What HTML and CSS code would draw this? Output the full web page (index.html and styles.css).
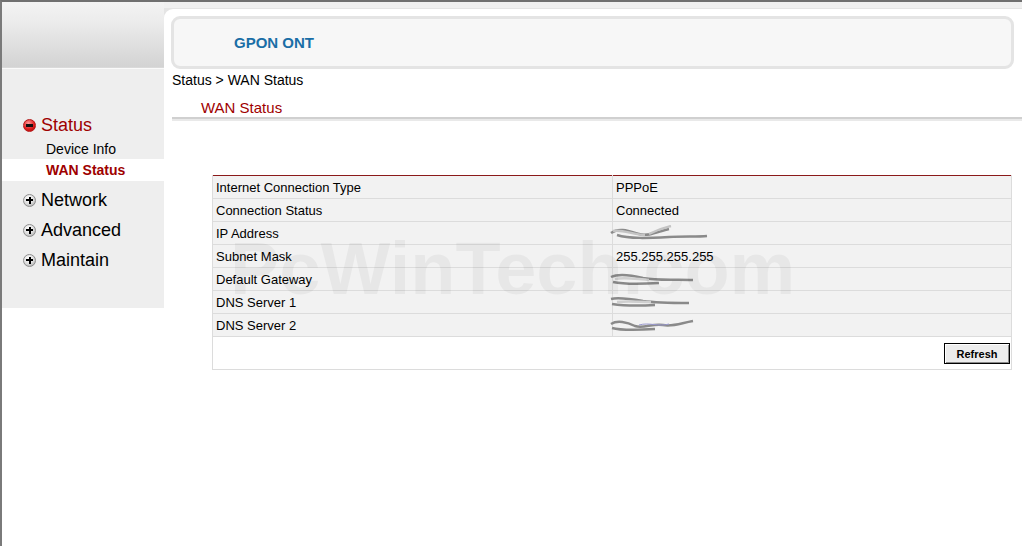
FILE: index.html
```html
<!DOCTYPE html>
<html>
<head>
<meta charset="utf-8">
<title>GPON ONT - WAN Status</title>
<link rel="stylesheet" href="styles.css">
</head>
<body>
<div class="frame">
  <aside class="side">
    <div class="logo"></div>
    <nav class="nav">
      <div class="grp open"><span class="ico minus"></span>Status</div>
      <div class="sub">Device Info</div>
      <div class="sub active">WAN Status</div>
      <div class="grp first-closed"><span class="ico plus"></span>Network</div>
      <div class="grp"><span class="ico plus"></span>Advanced</div>
      <div class="grp"><span class="ico plus"></span>Maintain</div>
    </nav>
  </aside>
  <main class="main">
    <div class="topstrip"></div>
    <div class="panel">
      <div class="hdr"><span class="brand">GPON ONT</span></div>
      <div class="crumb">Status &gt; WAN Status</div>
      <div class="title">WAN Status</div>
      <div class="sep"></div>
      <table class="info">
        <tr><td class="k">Internet Connection Type</td><td class="v">PPPoE</td></tr>
        <tr><td class="k">Connection Status</td><td class="v">Connected</td></tr>
        <tr><td class="k">IP Address</td><td class="v"><svg class="blur b1" width="100" height="16" viewBox="0 0 100 16"><path d="M2 8 C10 2 20 6 30 9 C40 12 50 6 60 4 M8 10 C20 14 40 13 60 12 C75 11 88 12 98 11" fill="none" stroke="#8a8a8a" stroke-width="2.5"/><path d="M4 6 C14 4 24 10 36 10 M40 9 C52 3 58 2 62 1" fill="none" stroke="#c4c4c4" stroke-width="2.5"/></svg></td></tr>
        <tr><td class="k">Subnet Mask</td><td class="v">255.255.255.255</td></tr>
        <tr><td class="k">Default Gateway</td><td class="v"><svg class="blur" width="90" height="16" viewBox="0 0 90 16"><path d="M2 6 C10 2 22 4 34 7 C50 10 66 8 84 9 M4 11 C18 14 34 13 50 12" fill="none" stroke="#8a8a8a" stroke-width="2.5"/><path d="M6 8 C16 6 26 8 40 9" fill="none" stroke="#cfcfcf" stroke-width="2.5"/></svg></td></tr>
        <tr><td class="k">DNS Server 1</td><td class="v"><svg class="blur" width="90" height="16" viewBox="0 0 90 16"><path d="M2 5 C10 3 22 5 34 7 C48 9 64 9 80 9 M3 10 C16 12 30 12 46 11" fill="none" stroke="#8a8a8a" stroke-width="2.5"/><path d="M8 8 C18 7 30 8 42 8" fill="none" stroke="#cfcfcf" stroke-width="2.5"/></svg></td></tr>
        <tr><td class="k">DNS Server 2</td><td class="v"><svg class="blur" width="90" height="16" viewBox="0 0 90 16"><path d="M2 7 C8 3 18 5 26 9 C34 12 44 6 54 8 C64 10 72 6 84 4 M3 11 C14 14 30 13 46 12" fill="none" stroke="#8a8a8a" stroke-width="2.5"/><path d="M30 8 C40 5 50 10 60 7" fill="none" stroke="#9a9ad0" stroke-width="1"/></svg></td></tr>
        <tr class="foot"><td colspan="2"><button class="btn">Refresh</button></td></tr>
      </table>
    </div>
  </main>
  <div class="watermark">PcWinTech.com</div>
</div>
</body>
</html>
```
FILE: styles.css
```css
html, body {
  margin: 0;
  padding: 0;
  background: #fff;
  font-family: "Liberation Sans", Arial, sans-serif;
}
.frame {
  position: relative;
  display: flex;
  height: 544px;
  border-top: 2px solid #707070;
  border-left: 2px solid #7a7a7a;
  overflow: hidden;
}
.side {
  width: 162px;
  flex: none;
}
.logo {
  height: 65px;
  background: linear-gradient(#f3f3f3, #ececec 30%, #d3d3d3);
  border-bottom: 1px solid #dadada;
}
.nav {
  height: 197px;
  padding-top: 42px;
  background: #eeeeee;
  border-top: 1px solid #fafafa;
}
.grp {
  height: 28px;
  line-height: 28px;
  font-size: 18px;
  color: #000;
  padding-left: 21px;
  display: flex;
  align-items: center;
}
.grp.open { color: #9e0000; }
.grp.first-closed { margin-top: 5px; }
.grp + .grp { margin-top: 2px; }
.ico {
  width: 13px;
  height: 13px;
  border-radius: 50%;
  margin-right: 5px;
  position: relative;
  flex: none;
  box-sizing: border-box;
}
.ico.minus {
  background: radial-gradient(circle at 40% 30%, #ff9a9a, #e02020 55%, #a80000);
  border: 1px solid #b41818;
}
.ico.plus {
  background: radial-gradient(circle at 40% 30%, #ffffff, #dcdcdc 55%, #9a9a9a);
  border: 1px solid #8e8e8e;
}
.ico::before, .ico.plus::after {
  content: "";
  position: absolute;
  background: #000;
}
.ico.minus::before {
  left: 2px; right: 2px; top: 4px; height: 3px;
  background: #111;
}
.ico.plus::before {
  left: 2px; right: 2px; top: 4.5px; height: 2px;
}
.ico.plus::after {
  top: 2px; bottom: 2px; left: 4.5px; width: 2px;
}
.sub {
  padding-left: 44px;
  height: 20px;
  line-height: 20px;
  font-size: 14px;
  color: #000;
}
.sub.active {
  height: 22px;
  line-height: 22px;
  background: #fff;
  color: #9e0000;
  font-weight: bold;
  font-size: 14px;
}
.main {
  flex: 1;
  display: flex;
  flex-direction: column;
  background: #e4e4e4;
}
.topstrip {
  height: 6px;
  background: #f0f0f0;
  border-bottom: 1px solid #e4e4e4;
}
.panel {
  flex: 1;
  background: #fff;
  border-top-left-radius: 9px;
  padding-top: 7px;
}
.hdr {
  margin: 0 8px 0 7px;
  height: 47px;
  border: 3px solid #e4e4e4;
  border-radius: 9px;
  background: #f7f7f7;
  display: flex;
  align-items: center;
  padding-left: 60px;
}
.brand {
  font-size: 15px;
  font-weight: bold;
  color: #1a6ea6;
}
.crumb {
  margin: 2px 0 0 8px;
  font-size: 14px;
  line-height: 18px;
  color: #000;
}
.title {
  margin-top: 10px;
  padding-left: 37px;
  font-size: 15px;
  line-height: 18px;
  color: #a00000;
}
.sep {
  margin: 0 0 0 8px;
  border-top: 2px solid #d0d0d0;
  border-bottom: 2px solid #e9e9e9;
}
.info {
  margin: 54px 0 0 48px;
  width: 800px;
  border-collapse: collapse;
  border-top: 1px solid #8b1a1a;
  font-size: 13px;
}
.info td {
  height: 22px;
  padding: 0 3px;
  background: #f2f2f2;
  border: 1px solid #dcdcdc;
  color: #000;
  vertical-align: middle;
}
.info tr:first-child td { border-top: none; }
.info td.k { width: 393px; }
.blur { display: block; margin-left: -7px; }
.info .foot td {
  background: #fff;
  height: 32px;
  text-align: right;
  padding: 0 1px 0 0;
}
.btn {
  width: 66px;
  height: 21px;
  font-family: "Liberation Sans", Arial, sans-serif;
  font-size: 11px;
  font-weight: bold;
  color: #000;
  background: #ececec;
  border: 1px solid #000;
  box-shadow: inset 1px 1px 0 #fff, inset -1px -1px 0 #8a8a8a;
  padding: 0;
  margin-top: 1px;
}
.watermark {
  position: absolute;
  left: 228px;
  top: 230px;
  font-size: 74px;
  line-height: 74px;
  font-weight: bold;
  color: rgba(0, 0, 0, 0.045);
  white-space: nowrap;
  pointer-events: none;
}
```
